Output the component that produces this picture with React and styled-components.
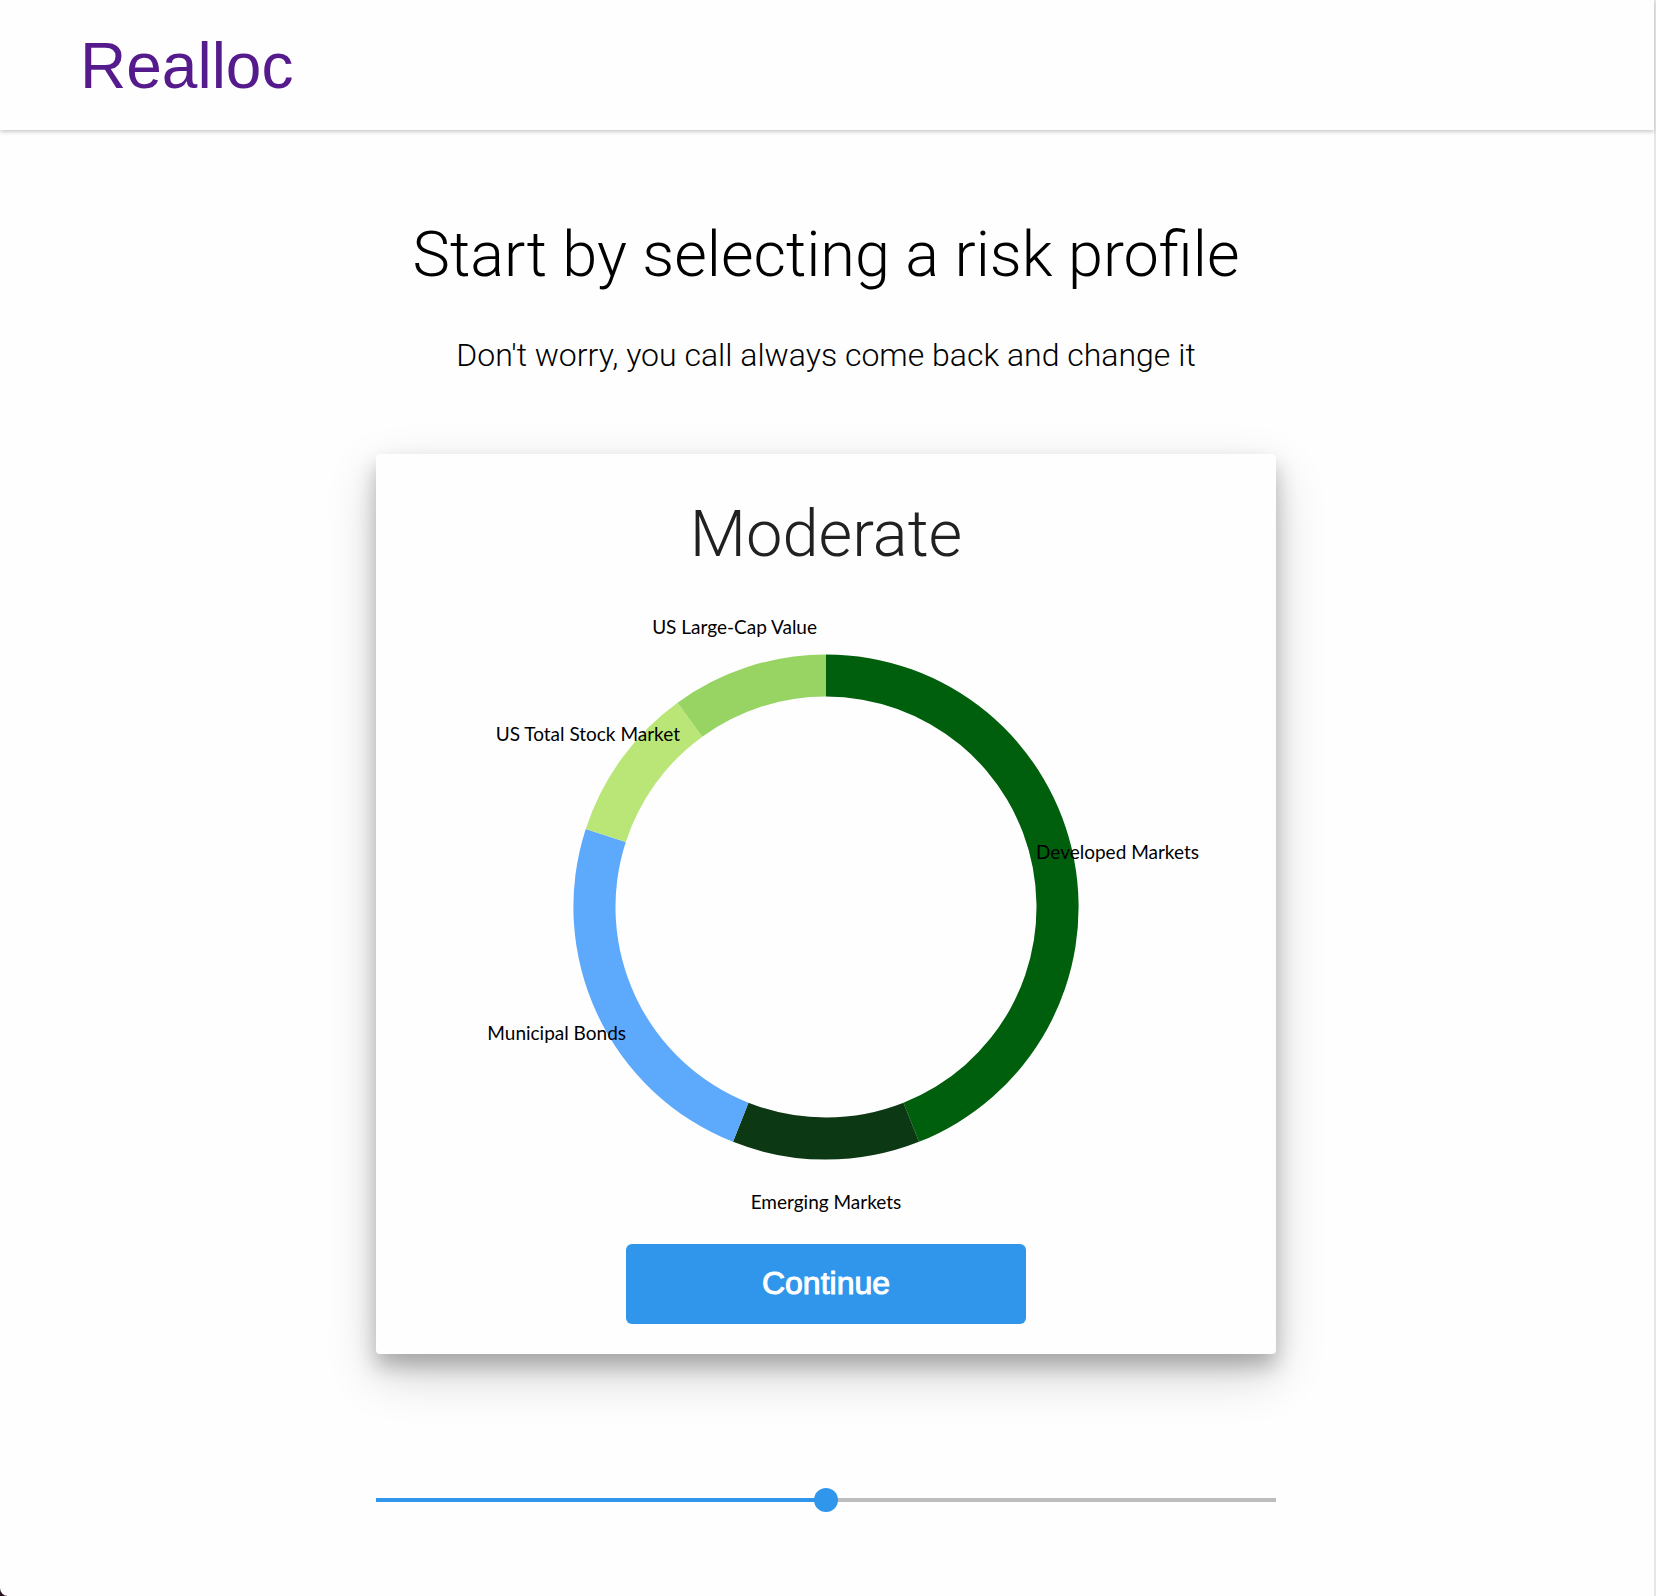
import React, { useId, useState } from "react";
import styled, { createGlobalStyle } from "styled-components";

const colors = {
  page: "#fefefe",
  brand: "#551a8b",
  primary: "#2f96ec",
  track: "#bdbdbd",
  edge: "#e7e7e7",
};

const fonts = {
  heading: '"Helvetica Neue Light", Roboto, "Liberation Sans", sans-serif',
  body: '"Liberation Sans", Arial, sans-serif',
  chart: '"Gill Sans", Lato, "Open Sans", sans-serif',
};

const GlobalStyle = createGlobalStyle`
  *, *::before, *::after { box-sizing: border-box; }
  body { margin: 0; background: #2b1020; font-family: ${fonts.body}; }
  h1, h2, p { margin: 0; }
`;

const Page = styled.div`
  min-height: 100vh;
  display: flex;
  flex-direction: column;
  background: ${colors.page};
  border-right: 2px solid ${colors.edge};
  border-bottom-left-radius: 8px;
`;

const Header = styled.header`
  padding: 30px 80px 28px;
  box-shadow: 0 2px 4px rgba(0, 0, 0, 0.2);
`;

const Brand = styled.a`
  display: inline-block;
  color: ${colors.brand};
  font-size: 64px;
  line-height: 72px;
  text-decoration: none;
`;

const Main = styled.main`
  display: flex;
  flex-direction: column;
  align-items: center;
  padding: 87px 26px 80px 24px;
`;

const Title = styled.h1`
  font: 300 63px/76px ${fonts.heading};
  color: #000;
  text-align: center;
`;

const Subtitle = styled.p`
  margin-top: 43px;
  font: 300 32px/38px ${fonts.heading};
  color: #000;
  text-align: center;
`;

const Card = styled.section`
  width: 100%;
  max-width: 900px;
  margin-top: 80px;
  padding: 42px 0 30px;
  display: flex;
  flex-direction: column;
  align-items: center;
  background: ${colors.page};
  border-radius: 4px;
  box-shadow: 0 20px 50px rgba(0, 0, 0, 0.19), 0 12px 20px rgba(0, 0, 0, 0.23);
`;

const ProfileName = styled.h2`
  font: 300 65px/76px ${fonts.heading};
  color: #212121;
`;

const Chart = styled.svg`
  display: block;
  width: 100%;
  height: auto;
`;

const SliceLabel = styled.text`
  font-family: ${fonts.chart};
  font-size: 19px;
  fill: #000;
`;

const ContinueButton = styled.button`
  width: 400px;
  max-width: 100%;
  height: 80px;
  padding: 0 0 2px;
  border: 0;
  border-radius: 6px;
  background: ${colors.primary};
  color: #fff;
  font: 400 32px/40px ${fonts.body};
  -webkit-text-stroke: 1px #fff;
  cursor: pointer;
`;

const RiskSlider = styled.input`
  appearance: none;
  width: 100%;
  max-width: 900px;
  height: 24px;
  margin: 134px 0 0;
  background: transparent;
  cursor: pointer;

  &::-webkit-slider-runnable-track {
    height: 4px;
    background: linear-gradient(
      to right,
      ${colors.primary} var(--fill),
      ${colors.track} var(--fill)
    );
  }

  &::-webkit-slider-thumb {
    appearance: none;
    width: 24px;
    height: 24px;
    margin-top: -10px;
    border-radius: 50%;
    background: ${colors.primary};
  }
`;

const slices = [
  { name: "Developed Markets", share: 44, color: "#005f0c", x: 660, y: 287, anchor: "start" },
  { name: "Emerging Markets", share: 12, color: "#0c3813", x: 450, y: 637, anchor: "middle" },
  { name: "Municipal Bonds", share: 24, color: "#5da9fb", x: 250, y: 468, anchor: "end" },
  { name: "US Total Stock Market", share: 10, color: "#bae677", x: 304, y: 169, anchor: "end" },
  { name: "US Large-Cap Value", share: 10, color: "#97d464", x: 441, y: 62, anchor: "end" },
];

const CENTER = { x: 450, y: 335 };
const OUTER = 252.6;
const INNER = 210.5;

function pointAt(radius, share) {
  const angle = (share / 100) * 2 * Math.PI;
  return `${CENTER.x + radius * Math.sin(angle)} ${CENTER.y - radius * Math.cos(angle)}`;
}

function slicePath(from, to) {
  const large = to - from > 50 ? 1 : 0;
  return [
    `M ${pointAt(OUTER, from)}`,
    `A ${OUTER} ${OUTER} 0 ${large} 1 ${pointAt(OUTER, to)}`,
    `L ${pointAt(INNER, to)}`,
    `A ${INNER} ${INNER} 0 ${large} 0 ${pointAt(INNER, from)}`,
    "Z",
  ].join(" ");
}

function AllocationChart() {
  let start = 0;
  const arcs = slices.map((slice) => {
    const from = start;
    start += slice.share;
    return <path key={slice.name} d={slicePath(from, start)} fill={slice.color} />;
  });

  return (
    <Chart viewBox="0 0 900 672" role="img" aria-label="Portfolio allocation">
      {arcs}
      {slices.map(({ name, x, y, anchor }) => (
        <SliceLabel key={name} x={x} y={y} textAnchor={anchor}>
          {name}
        </SliceLabel>
      ))}
    </Chart>
  );
}

export default function App() {
  const [risk, setRisk] = useState(50);
  const profileId = useId();

  return (
    <>
      <GlobalStyle />
      <Page>
        <Header>
          <Brand href="#">Realloc</Brand>
        </Header>
        <Main>
          <Title>Start by selecting a risk profile</Title>
          <Subtitle>Don't worry, you call always come back and change it</Subtitle>
          <Card>
            <ProfileName id={profileId}>Moderate</ProfileName>
            <AllocationChart />
            <ContinueButton type="button">Continue</ContinueButton>
          </Card>
          <RiskSlider
            type="range"
            min="0"
            max="100"
            value={risk}
            aria-labelledby={profileId}
            onChange={(event) => setRisk(Number(event.target.value))}
            style={{ "--fill": `${risk}%` }}
          />
        </Main>
      </Page>
    </>
  );
}
